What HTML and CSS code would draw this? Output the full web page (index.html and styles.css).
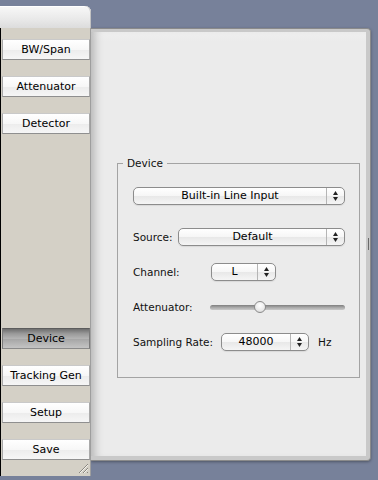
FILE: index.html
```html
<!DOCTYPE html>
<html lang="en">
<head>
  <meta charset="UTF-8" />
  <meta name="viewport" content="width=device-width, initial-scale=1.0"/>
  <title>Device Settings</title>
  <link rel="stylesheet" href="styles.css">
</head>
<body>
  <div class="desk">
    <div class="drawer">
      <div class="drawer-title"></div>
      <div class="drawer-body">
        <button class="side-btn">BW/Span</button>
        <button class="side-btn">Attenuator</button>
        <button class="side-btn">Detector</button>
        <div class="spacer"></div>
        <button class="side-btn pressed">Device</button>
        <button class="side-btn">Tracking Gen</button>
        <button class="side-btn">Setup</button>
        <button class="side-btn">Save</button>
        <svg class="grip" width="11" height="11" viewBox="0 0 11 11">
          <path d="M1 10 L10 1 M5 10 L10 5 M9 10 L10 9" stroke="#8a8780" stroke-width="1"/>
          <path d="M2 10 L10 2 M6 10 L10 6" stroke="#f4f2ec" stroke-width="1"/>
        </svg>
      </div>
    </div>

    <div class="window">
      <div class="window-inner">
        <fieldset class="group">
          <legend>Device</legend>

          <div class="row">
            <div class="popup wide">
              <span class="popup-value">Built-in Line Input</span>
              <span class="popup-arrows">
                <svg width="5" height="10" viewBox="0 0 5 10"><path d="M0 4 L2.5 0 L5 4 Z M0 6 L5 6 L2.5 10 Z" fill="#222"/></svg>
              </span>
            </div>
          </div>

          <div class="row row-source">
            <span class="label label-source">Source:</span>
            <div class="popup wide">
              <span class="popup-value">Default</span>
              <span class="popup-arrows">
                <svg width="5" height="10" viewBox="0 0 5 10"><path d="M0 4 L2.5 0 L5 4 Z M0 6 L5 6 L2.5 10 Z" fill="#222"/></svg>
              </span>
            </div>
          </div>

          <div class="row">
            <span class="label label-channel">Channel:</span>
            <div class="popup channel">
              <span class="popup-value">L</span>
              <span class="popup-arrows">
                <svg width="5" height="10" viewBox="0 0 5 10"><path d="M0 4 L2.5 0 L5 4 Z M0 6 L5 6 L2.5 10 Z" fill="#222"/></svg>
              </span>
            </div>
          </div>

          <div class="row">
            <span class="label label-atten">Attenuator:</span>
            <div class="slider">
              <div class="track"></div>
              <div class="knob" style="left: 44px"></div>
            </div>
          </div>

          <div class="row">
            <span class="label label-rate">Sampling Rate:</span>
            <div class="popup rate">
              <span class="popup-value">48000</span>
              <span class="popup-arrows">
                <svg width="5" height="10" viewBox="0 0 5 10"><path d="M0 4 L2.5 0 L5 4 Z M0 6 L5 6 L2.5 10 Z" fill="#222"/></svg>
              </span>
            </div>
            <span class="unit">Hz</span>
          </div>
        </fieldset>
      </div>
    </div>
  </div>
</body>
</html>
```

FILE: styles.css
```css
body {
  margin: 0;
  height: 480px;
  overflow: hidden;
  background-color: #77819a;
  font-family: "DejaVu Sans", sans-serif;
  font-size: 10.5px;
  color: #111;
}

.desk {
  display: flex;
  align-items: flex-start;
  padding-top: 6px;
}

/* left drawer */
.drawer {
  width: 91px;
  height: 470px;
  display: flex;
  flex-direction: column;
  flex-shrink: 0;
  position: relative;
  z-index: 1;
}

.drawer-title {
  height: 22px;
  background: linear-gradient(#f8f8f8, #e9e9e9 60%, #dcdcdc);
  border-top-right-radius: 6px;
  box-shadow: inset -1px 0 0 #c2c2c2, inset 0 1px 0 #ffffff;
}

.drawer-body {
  flex: 1;
  display: flex;
  flex-direction: column;
  gap: 16px;
  padding: 11px 0 16px 1px;
  background-color: #d4d0c6;
  border-left: 1px solid #000;
  border-right: 1px solid #9e9e9e;
  position: relative;
}

.side-btn {
  height: 21px;
  margin: 0;
  padding: 0;
  box-sizing: border-box;
  border: 1px solid #a9a9a9;
  border-top-color: #c9c9c9;
  border-bottom-color: #8f8f8f;
  background: linear-gradient(#ffffff, #f7f7f7 50%, #ececec 52%, #f6f6f6);
  font: inherit;
  font-size: 11px;
  color: #000;
  text-align: center;
  line-height: 19px;
}

.side-btn.pressed {
  border-color: #5c5c5c #7a7a7a #8a8a8a;
  background: linear-gradient(#6e6e6e, #9a9a9a 25%, #b3b3b3 50%, #a5a5a5 52%, #c4c4c4);
}

.spacer {
  flex: 1;
}

.grip {
  position: absolute;
  right: 1px;
  bottom: 2px;
}

/* main window */
.window {
  width: 280px;
  height: 433px;
  margin-top: 22px;
  box-sizing: border-box;
  border: 1px solid #8a8a8a;
  border-left: none;
  border-radius: 0 4px 4px 0;
  padding: 3px 4px 4px 0;
  background-color: #c9c9c9;
  box-shadow: 0 1px 3px rgba(0, 0, 0, 0.35);
  position: relative;
}

.window::after {
  content: "";
  position: absolute;
  right: 1px;
  top: 209px;
  width: 1px;
  height: 12px;
  background-color: #6b6b6b;
}

.window-inner {
  height: 100%;
  background: linear-gradient(#efefef, #ebebeb 10px);
  box-shadow: inset 10px 0 8px -6px rgba(0, 0, 0, 0.22);
  overflow: hidden;
}

.group {
  margin: 125px 6px 0 26px;
  padding: 18px 14px 26px 15px;
  border: 1px solid #a3a3a3;
  min-inline-size: 0;
  display: flex;
  flex-direction: column;
  gap: 17px;
}

.group legend {
  margin-left: -10px;
  padding: 0 4px;
  line-height: 12px;
}

.row {
  display: flex;
  align-items: center;
  height: 18px;
}

.row-source {
  margin-top: 6px;
}

.label {
  flex-shrink: 0;
}

.label-source {
  width: 45px;
}

.label-channel {
  width: 78px;
}

.label-atten {
  width: 77px;
}

.label-rate {
  width: 88px;
}

.popup {
  display: flex;
  height: 18px;
  box-sizing: border-box;
  border: 1px solid #8c8c8c;
  border-radius: 5px;
  background: linear-gradient(#ffffff, #f6f6f6 50%, #e8e8e8 52%, #f5f5f5);
  box-shadow: 0 1px 1px rgba(0, 0, 0, 0.08);
}

.popup.wide {
  flex: 1;
}

.popup.channel {
  width: 65px;
}

.popup.rate {
  width: 88px;
}

.popup-value {
  flex: 1;
  text-align: center;
  font-size: 11px;
  line-height: 16px;
  color: #000;
}

.popup-arrows {
  width: 18px;
  box-sizing: border-box;
  border-left: 1px solid #b5b5b5;
  display: flex;
  align-items: center;
  justify-content: center;
}

.unit {
  margin-left: 9px;
}

.slider {
  width: 135px;
  height: 12px;
  position: relative;
  display: flex;
  align-items: center;
}

.track {
  width: 100%;
  height: 5px;
  border-radius: 3px;
  background: linear-gradient(#7e7e7e, #a9a9a9 50%, #c9c9c9);
}

.knob {
  position: absolute;
  top: 0;
  width: 12px;
  height: 12px;
  box-sizing: border-box;
  border-radius: 50%;
  border: 1px solid #8a8a8a;
  background: radial-gradient(circle at 50% 35%, #ffffff, #e9e9e9 60%, #cfcfcf);
}
```
